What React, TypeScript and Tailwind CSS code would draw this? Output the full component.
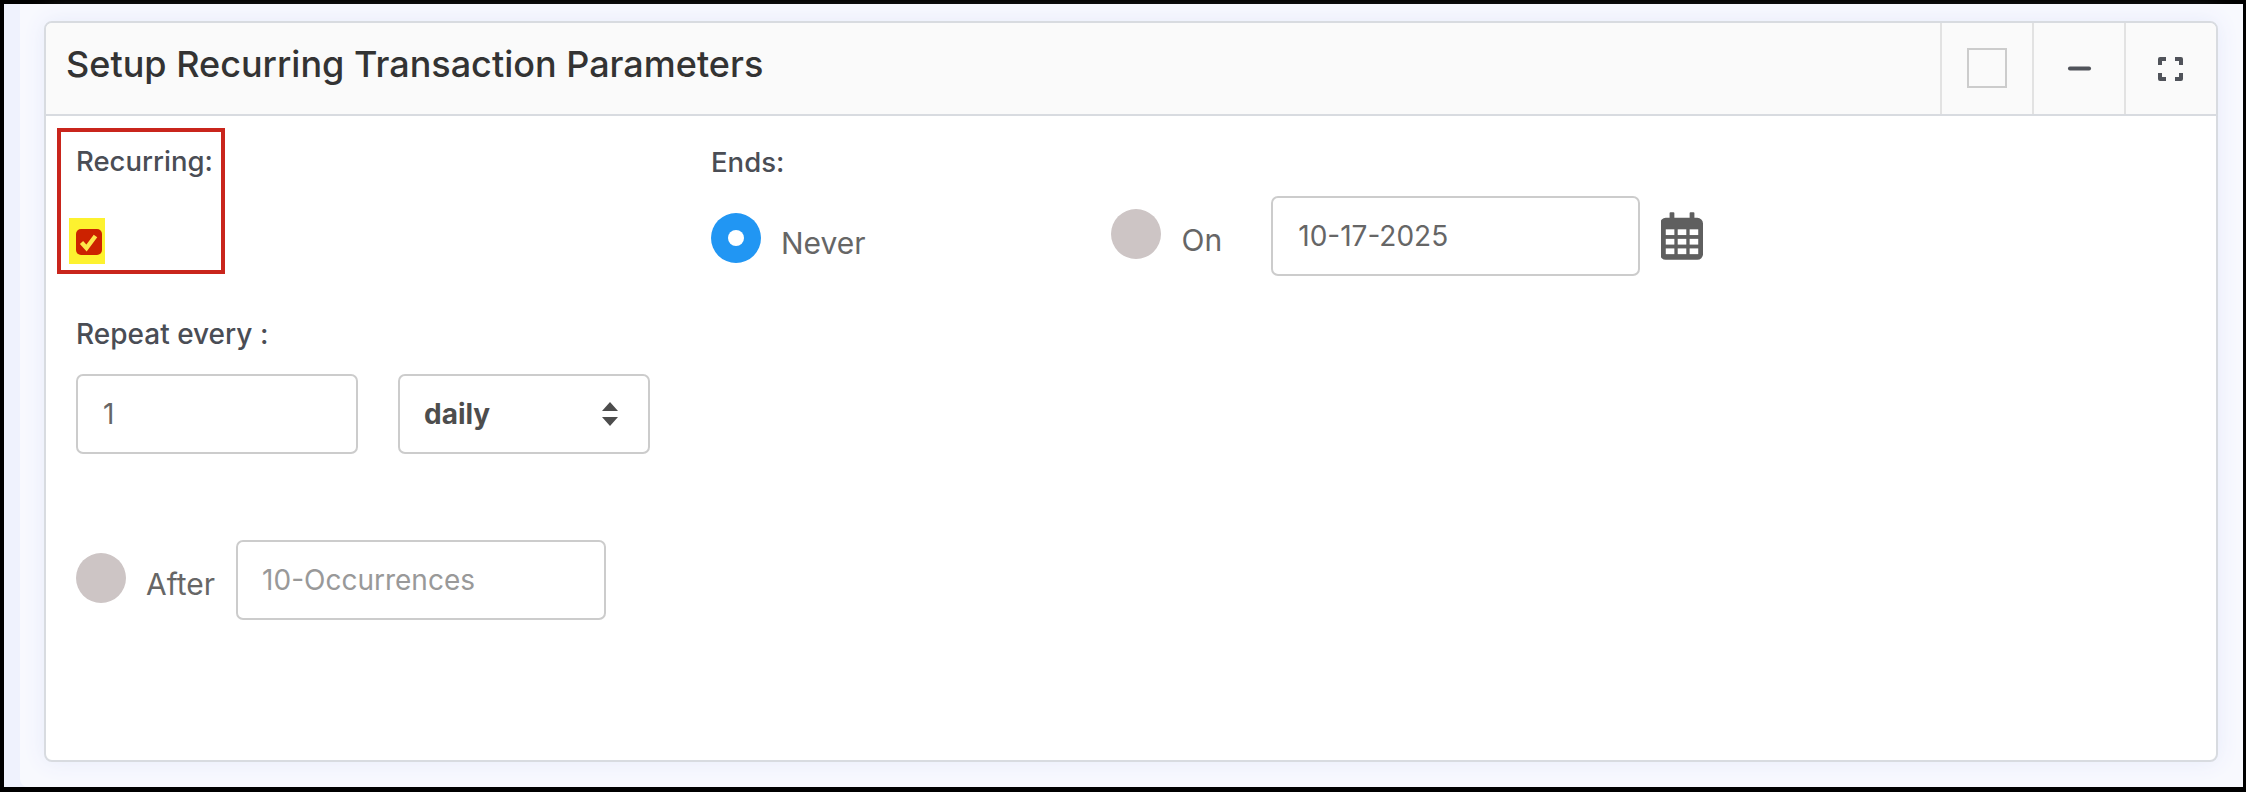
import { Minus } from 'lucide-react';

function Radio({ checked = false }: { checked?: boolean }) {
  return (
    <span
      className={`flex h-[50px] w-[50px] shrink-0 items-center justify-center rounded-full ${
        checked ? 'bg-[#2196f3]' : 'bg-[#cdc5c5]'
      }`}
    >
      {checked && <span className="h-[16px] w-[16px] rounded-full bg-white" />}
    </span>
  );
}

function CalendarIcon() {
  return (
    <svg width="42" height="48" viewBox="0 0 44 50" className="shrink-0">
      <path
        fill="#5f5f5f"
        d="M10 0h3a1 1 0 0 1 1 1v5h16V1a1 1 0 0 1 1-1h3a1 1 0 0 1 1 1v5h3a6 6 0 0 1 6 6v32a6 6 0 0 1-6 6H5a6 6 0 0 1-6-6V12a6 6 0 0 1 6-6h4V1a1 1 0 0 1 1-1z"
      />
      <g fill="#fff">
        <rect x="5" y="18" width="9" height="6" />
        <rect x="17.5" y="18" width="9" height="6" />
        <rect x="30" y="18" width="9" height="6" />
        <rect x="5" y="28" width="9" height="6" />
        <rect x="17.5" y="28" width="9" height="6" />
        <rect x="30" y="28" width="9" height="6" />
        <rect x="5" y="38" width="9" height="6" />
        <rect x="17.5" y="38" width="9" height="6" />
        <rect x="30" y="38" width="9" height="6" />
      </g>
    </svg>
  );
}

export default function App() {
  return (
    <div className="h-[792px] w-[2246px] bg-black pt-[4px] pr-[3px] pb-[5px] pl-[4px] font-['Inter',sans-serif]">
      <div className="h-full bg-[#eff2fd] pl-[16px]">
        <div className="h-full rounded-bl-[8px] bg-[#f8f9fe] pt-[17px] pr-[25px] pl-[24px]">
          <div className="flex h-[741px] flex-col overflow-hidden rounded-[8px] border-2 border-[#d8dbe0] bg-white shadow-[0_0_22px_#e6eafb]">
            {/* header */}
            <div className="flex h-[93px] shrink-0 items-stretch border-b-2 border-[#d8dbe0] bg-[#fafafa]">
              <h1 className="flex-1 pt-[19px] pl-[20px] text-[36px] leading-[44px] font-medium text-[#333]">
                Setup Recurring Transaction Parameters
              </h1>
              <div className="flex w-[92px] justify-center border-l-2 border-[#e2e2e2] pt-[25px]">
                <span className="h-[40px] w-[40px] border-2 border-[#cccccc]" />
              </div>
              <div className="flex w-[92px] items-center justify-center border-l-2 border-[#e2e2e2]">
                <Minus size={33} strokeWidth={2.8} color="#50535a" />
              </div>
              <div className="flex w-[92px] items-center justify-center border-l-2 border-[#e2e2e2] pr-[2px]">
                <svg
                  width="25"
                  height="24"
                  viewBox="0 0 25 24"
                  fill="none"
                  stroke="#50535a"
                  strokeWidth="4"
                  strokeLinejoin="round"
                >
                  <path d="M2 8V2h6M17 2h6v6M23 16v6h-6M8 22H2v-6" />
                </svg>
              </div>
            </div>

            {/* body */}
            <div className="flex-1 pt-[12px] pl-[11px]">
              <div className="flex">
                <div className="h-[146px] w-[168px] border-[4px] border-[#c9251c] pt-[11px] pl-[15px]">
                  <p className="text-[27.5px] leading-[36px] font-medium text-[#4a4d55]">Recurring:</p>
                  <div className="mt-[39px] -ml-[7px] h-[46px] w-[36px] bg-[#fdf22f] pt-[11px] pl-[7px]">
                    <span className="block h-[26px] w-[26px] rounded-[5px] bg-[#cc2200]">
                      <svg width="26" height="26" viewBox="0 0 26 26" fill="none" stroke="#fde84a" strokeWidth="4.4">
                        <path d="M5.5 13.5l5 5.5L19.5 7" />
                      </svg>
                    </span>
                  </div>
                </div>

                <div className="ml-[486px] pt-[16px]">
                  <p className="text-[27.5px] leading-[36px] font-medium text-[#4a4d55]">Ends:</p>
                  <div className="mt-[16px] flex items-start">
                    <div className="mt-[17px] flex items-center">
                      <Radio checked />
                      <span className="mt-[10px] ml-[20px] text-[30px] leading-[40px] text-[#666]">Never</span>
                    </div>
                    <div className="mt-[12px] ml-[245px] flex items-center">
                      <Radio />
                      <span className="mt-[12px] ml-[21px] text-[30px] leading-[40px] text-[#666]">On</span>
                    </div>
                    <input
                      readOnly
                      defaultValue="10-17-2025"
                      className="ml-[49px] h-[80px] w-[369px] rounded-[7px] border-2 border-[#cccccc] pl-[25px] text-[28px] text-[#666] outline-none"
                    />
                    <span className="mt-[16px] ml-[21px]">
                      <CalendarIcon />
                    </span>
                  </div>
                </div>
              </div>

              <div className="mt-[40px] pl-[19px]">
                <p className="text-[28px] leading-[36px] font-medium text-[#4a4d55]">Repeat every :</p>
                <div className="mt-[22px] flex">
                  <input
                    readOnly
                    defaultValue="1"
                    className="h-[80px] w-[282px] rounded-[7px] border-2 border-[#cccccc] pl-[25px] text-[28px] text-[#666] outline-none"
                  />
                  <div className="ml-[40px] flex h-[80px] w-[252px] items-center justify-between rounded-[7px] border-2 border-[#cccccc] pr-[29px] pl-[24px]">
                    <span className="text-[28px] font-bold text-[#4d4d4d]">daily</span>
                    <svg width="18" height="24" viewBox="0 0 18 24" fill="#4d4d4d">
                      <path d="M9 0l8 9H1zM9 24l-8-9h16z" />
                    </svg>
                  </div>
                </div>

                <div className="mt-[86px] flex items-start">
                  <div className="mt-[12px] flex items-center">
                    <Radio />
                    <span className="mt-[12px] ml-[20px] text-[30px] leading-[40px] text-[#666]">After</span>
                  </div>
                  <input
                    readOnly
                    placeholder="10-Occurrences"
                    className="ml-[21px] h-[80px] w-[370px] rounded-[7px] border-2 border-[#cccccc] pl-[24px] text-[28px] text-[#666] outline-none placeholder:text-[#999]"
                  />
                </div>
              </div>
            </div>
          </div>
        </div>
      </div>
    </div>
  );
}
